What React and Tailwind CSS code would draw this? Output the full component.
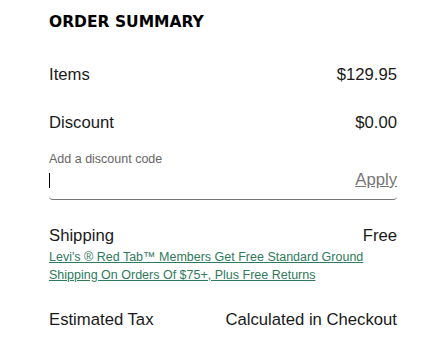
export default function App() {
  return (
    <div className="w-[426px] h-[347px] bg-white pl-[49px] pr-[29px] pt-[11px] font-['Liberation_Sans',Arial,sans-serif] text-[#1a1a1a] overflow-hidden">
      <h2 className="font-['DejaVu_Sans',sans-serif] font-bold text-[15.5px] leading-[22px] tracking-[0px] text-black">ORDER SUMMARY</h2>
      <div className="mt-[32px] flex justify-between text-[16.7px] leading-[20px]">
        <span>Items</span>
        <span>$129.95</span>
      </div>
      <div className="mt-[28px] flex justify-between text-[16.7px] leading-[20px]">
        <span>Discount</span>
        <span>$0.00</span>
      </div>
      <div className="mt-[19px] text-[12.5px] leading-[14px] text-[#666]">Add a discount code</div>
      <div className="h-[34px] pt-[4px] flex items-start justify-between border-b border-[#767676] rounded-b-[4px]">
        <span className="w-px h-[15px] mt-[3px] bg-black"></span>
        <button className="text-[16.7px] leading-[20px] text-[#767676] underline">Apply</button>
      </div>
      <div className="mt-[26px] flex justify-between text-[16.7px] leading-[20px]">
        <span>Shipping</span>
        <span>Free</span>
      </div>
      <a href="#" className="block mt-[2px] text-[12.5px] leading-[18px] text-[#2f7a5c] underline">
        Levi's ® Red Tab™ Members Get Free Standard Ground<br />Shipping On Orders Of $75+, Plus Free Returns
      </a>
      <div className="mt-[26px] flex justify-between text-[16.7px] leading-[20px]">
        <span>Estimated Tax</span>
        <span>Calculated in Checkout</span>
      </div>
    </div>
  );
}
